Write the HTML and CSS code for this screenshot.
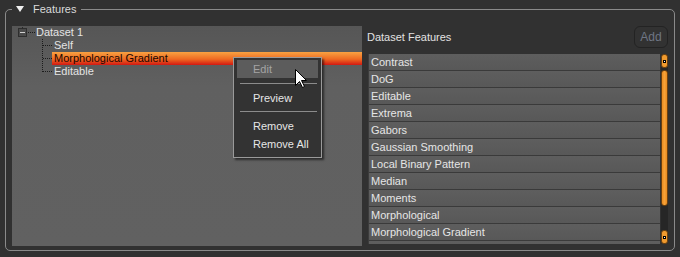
FILE: index.html
```html
<!DOCTYPE html>
<html>
<head>
<meta charset="utf-8">
<link rel="stylesheet" href="styles.css">
</head>
<body>
<fieldset class="group">
  <legend class="group-title"><span class="tri"></span>Features</legend>
  <div class="content">
    <div class="tree">
      <div class="row root-row">
        <span class="expander"><span class="minus"></span></span>
        <span class="hline"></span>
        <span class="label">Dataset 1</span>
      </div>
      <div class="children">
        <div class="row child"><span class="hdots"></span><span class="label">Self</span></div>
        <div class="row child selected"><span class="hdots"></span><span class="label">Morphological Gradient</span></div>
        <div class="row child"><span class="hdots"></span><span class="label">Editable</span></div>
      </div>
      <div class="menu">
        <div class="item disabled active">Edit</div>
        <div class="sep"></div>
        <div class="item">Preview</div>
        <div class="sep sep2"></div>
        <div class="item">Remove</div>
        <div class="item">Remove All</div>
      </div>
      <svg class="cursor" width="13" height="20" viewBox="0 0 13 20"><path d="M0.5 0.5 L0.5 16.5 L4.5 12.5 L7.5 18.5 L9.5 17.5 L6.5 11.5 L11.5 11.5 Z" fill="#fff" stroke="#000" stroke-width="1" stroke-linejoin="miter"/></svg>
    </div>
    <div class="side">
      <div class="side-head">
        <span class="side-title">Dataset Features</span>
        <button class="add">Add</button>
      </div>
      <div class="listwrap">
        <div class="list">
          <div class="lrow">Contrast</div>
          <div class="lrow">DoG</div>
          <div class="lrow">Editable</div>
          <div class="lrow">Extrema</div>
          <div class="lrow">Gabors</div>
          <div class="lrow">Gaussian Smoothing</div>
          <div class="lrow">Local Binary Pattern</div>
          <div class="lrow">Median</div>
          <div class="lrow">Moments</div>
          <div class="lrow">Morphological</div>
          <div class="lrow">Morphological Gradient</div>
          <div class="lrow"></div>
        </div>
        <div class="scroll">
          <div class="sbtn"><span class="dot"></span></div>
          <div class="handle"></div>
          <div class="sbtn sbtn-bottom"><span class="dot"></span></div>
        </div>
      </div>
    </div>
  </div>
</fieldset>
</body>
</html>
```
FILE: styles.css
```css
html, body {
  margin: 0;
  padding: 0;
  background: #313131;
  font-family: "Liberation Sans", Arial, sans-serif;
  font-size: 11px;
  color: #e4e4e4;
  overflow: hidden;
}

.group {
  box-sizing: border-box;
  margin: 3px 5px 0 5px;
  height: 248px;
  padding: 11px 6px 5px 6px;
  border: 1px solid #8a8a8a;
  border-radius: 5px;
  min-width: 0;
}

.group-title {
  padding: 0 5px 0 4px;
  line-height: 12px;
  height: 12px;
  color: #dadada;
  display: flex;
  align-items: center;
}

.tri {
  width: 0;
  height: 0;
  border-left: 4.5px solid transparent;
  border-right: 4.5px solid transparent;
  border-top: 6px solid #f0f0f0;
  margin-right: 9px;
}

.content {
  display: flex;
  height: 220px;
}

.tree {
  position: relative;
  width: 350px;
  height: 220px;
  flex: none;
  background: linear-gradient(#565656, #606060 60px, #616161);
}

.row {
  height: 13px;
  line-height: 13px;
  display: flex;
  align-items: center;
  white-space: nowrap;
}

.root-row {
  padding-left: 6px;
  position: relative;
}

.root-row::before {
  content: "";
  position: absolute;
  left: 10px;
  top: 1px;
  height: 2px;
  border-left: 1px solid #2a2a2a;
}

.expander {
  box-sizing: border-box;
  width: 9px;
  height: 9px;
  border: 1px solid #2e2e2e;
  background: #4a4a4a;
  display: flex;
  align-items: center;
  justify-content: center;
}

.minus {
  width: 5px;
  height: 1px;
  background: #d0d0d0;
}

.hline {
  width: 7px;
  border-top: 1px dotted #1c1c1c;
  margin-left: 1px;
}

.root-row .label {
  margin-left: 1px;
}

.children {
  position: relative;
  padding-left: 40px;
}

.children::before {
  content: "";
  position: absolute;
  left: 30px;
  top: 0;
  height: 33px;
  border-left: 1px dotted #1c1c1c;
}

.child .hdots {
  width: 9px;
  border-top: 1px dotted #1c1c1c;
  margin-left: -9px;
}

.child .label {
  flex: 1;
  padding-left: 2px;
  height: 13px;
}

.child.selected .label {
  background: linear-gradient(#f8a242, #ee6a22 55%, #d21812);
  color: #1a0600;
}

.menu {
  position: absolute;
  left: 221px;
  top: 31px;
  width: 81px;
  padding: 2px 3px 4px 3px;
  background: #333333;
  border: 1px solid #9a9a9a;
  box-shadow: 2px 2px 2px rgba(0, 0, 0, 0.55);
}

.item {
  height: 18px;
  line-height: 18px;
  padding-left: 16px;
  color: #e6e6e6;
}

.item.active {
  background: #5c5c5c;
}

.item.disabled {
  color: #a4a4a4;
}

.sep {
  height: 1px;
  background: #8c8c8c;
  margin: 5px 1px 5px 3px;
}

.sep2 {
  margin-top: 4px;
}

.cursor {
  position: absolute;
  left: 283px;
  top: 43px;
}

.side {
  flex: 1;
  padding-left: 6px;
  display: flex;
  flex-direction: column;
  min-width: 0;
}

.side-head {
  height: 22px;
  display: flex;
  align-items: center;
  justify-content: space-between;
  margin-bottom: 6px;
}

.side-title {
  color: #e2e2e2;
  margin-left: -1px;
}

.add {
  box-sizing: border-box;
  width: 34px;
  height: 22px;
  padding: 0;
  border: 1px solid #232323;
  border-radius: 6px;
  background: #323232;
  color: #6f7684;
  font-family: "Liberation Sans", Arial, sans-serif;
  font-size: 12px;
}

.listwrap {
  display: flex;
  height: 190px;
  gap: 1px;
}

.list {
  flex: 1;
  overflow: hidden;
  border-left: 1px solid #3c3c3c;
  background: #555;
}

.lrow {
  box-sizing: border-box;
  height: 17px;
  line-height: 16px;
  padding-left: 2px;
  border-bottom: 1px solid #3a3a3a;
  background: linear-gradient(#5e5e5e, #585858);
  color: #e6e6e6;
  white-space: nowrap;
}

.scroll {
  width: 7px;
  flex: none;
  background: #262626;
  border-radius: 3px;
  position: relative;
  display: flex;
  flex-direction: column;
}

.sbtn {
  box-sizing: border-box;
  height: 14px;
  border-radius: 3px;
  background: #f09a2e;
  border: 1px solid #6a4010;
  display: flex;
  align-items: center;
  justify-content: center;
}

.dot {
  width: 1px;
  height: 1px;
  background: #fff;
  border: 1px solid #000;
}

.handle {
  margin-top: 2px;
  height: 136px;
  border-radius: 3px;
  background: linear-gradient(90deg, #e88a20, #f7a238 50%, #e88a20);
  border: 1px solid #6a4010;
  box-sizing: border-box;
}

.sbtn-bottom {
  margin-top: auto;
  margin-bottom: 0;
}
```
